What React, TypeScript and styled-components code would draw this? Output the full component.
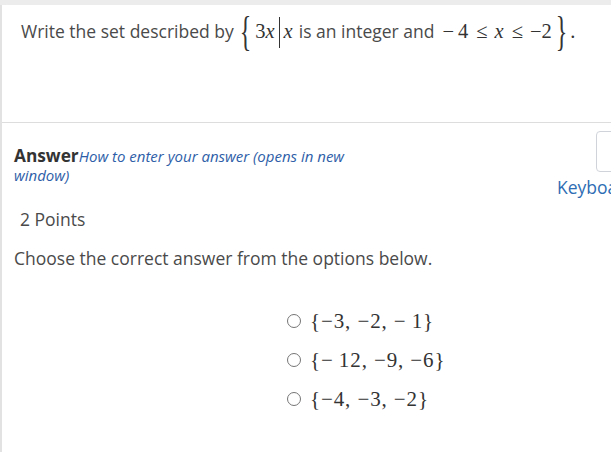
import React from 'react';
import styled, { createGlobalStyle } from 'styled-components';

const Global = createGlobalStyle`
  body {
    margin: 0;
    background: #ffffff;
    font-family: "Open Sans", "Liberation Sans", sans-serif;
    color: #4a4a4a;
    overflow: hidden;
  }
`;

const Page = styled.div`
  border-top: 5px solid #ececec;
  height: 447px;
  overflow: hidden;
`;

const Sheet = styled.div`
  border-left: 2px solid #e2e2e2;
  height: 100%;
`;

const QuestionPanel = styled.div`
  height: 118px;
  padding: 6px 19px 0;
  box-sizing: border-box;
  border-bottom: 1px solid #dddddd;
  font-size: 17.5px;
`;

const Prompt = styled.div`
  display: flex;
  align-items: center;
  height: 40px;
  white-space: nowrap;
`;

const Math = styled.span`
  font-family: "Liberation Serif", "Times New Roman", serif;
  font-size: 20.5px;
  color: #333333;
`;

const Var = styled(Math)`
  font-style: italic;
`;

const BigBrace = styled.span`
  display: inline-block;
  font-family: "Liberation Serif", serif;
  font-size: 24px;
  color: #333333;
  transform: scale(1, 1.75);
`;

const Bar = styled.span`
  display: inline-block;
  width: 0;
  height: 31px;
  border-left: 1.5px solid #333333;
  margin-top: 2px;
`;

const Gap = styled.span<{ $w: number }>`
  display: inline-block;
  flex: none;
  width: ${(p) => p.$w}px;
`;

const AnswerSection = styled.div`
  padding: 0 0 0 12px;
  font-size: 17.5px;
`;

const AnswerHeader = styled.div`
  display: flex;
  justify-content: space-between;
  margin-right: -56px;
`;

const AnswerTitle = styled.div`
  width: 345px;
  padding-top: 23px;
  line-height: 18px;
`;

const AnswerLabel = styled.span`
  font-weight: 700;
  font-size: 17.3px;
  color: #333333;
`;

const HelpLink = styled.a`
  font-style: italic;
  font-size: 15px;
  color: #2e5ea8;
  text-decoration: none;
`;

const KeyboardColumn = styled.div`
  width: 110px;
  padding-top: 8px;
  display: flex;
  flex-direction: column;
  align-items: flex-start;
`;

const KeyboardButton = styled.div`
  margin-left: 39px;
  width: 60px;
  height: 41px;
  border: 1px solid #d0d4da;
  border-radius: 4px;
  box-sizing: border-box;
`;

const KeyboardLabel = styled.div`
  margin-top: 3px;
  font-size: 17.5px;
  color: #2e6db4;
  white-space: nowrap;
`;

const Points = styled.div`
  margin: 8px 0 0 6px;
`;

const Instruction = styled.div`
  margin-top: 15px;
`;

const Options = styled.div`
  display: flex;
  flex-direction: column;
  gap: 15px;
  margin: 39px 0 0 273px;
`;

const Option = styled.label`
  display: flex;
  align-items: center;
  gap: 9px;
  height: 24px;
`;

const Radio = styled.span`
  width: 12px;
  height: 12px;
  border: 1.3px solid #757575;
  border-radius: 50%;
  flex: none;
`;

const OptionText = styled.span`
  font-family: "Liberation Serif", "Times New Roman", serif;
  font-size: 21px;
  letter-spacing: 0.9px;
  color: #333333;
  white-space: nowrap;
`;

const options = ['{\u22123, \u22122, \u2212\u20091}', '{\u2212\u200912, \u22129, \u22126}', '{\u22124, \u22123, \u22122}'];

export default function App() {
  return (
    <>
      <Global />
      <Page>
        <Sheet>
          <QuestionPanel>
            <Prompt>
              <span>Write the set described by</span>
              <Gap $w={6} />
              <BigBrace>{'{'}</BigBrace>
              <Gap $w={4} />
              <Math>3</Math>
              <Var>x</Var>
              <Gap $w={4} />
              <Bar />
              <Gap $w={4} />
              <Var>x</Var>
              <Gap $w={6} />
              <span>is an integer and</span>
              <Gap $w={8} />
              <Math>{'\u2212'}</Math>
              <Gap $w={4} />
              <Math>4</Math>
              <Gap $w={8} />
              <Math>{'\u2264'}</Math>
              <Gap $w={7} />
              <Var>x</Var>
              <Gap $w={8} />
              <Math>{'\u2264'}</Math>
              <Gap $w={7} />
              <Math>{'\u22122'}</Math>
              <Gap $w={4} />
              <BigBrace>{'}'}</BigBrace>
              <Gap $w={3} />
              <Math>.</Math>
            </Prompt>
          </QuestionPanel>
          <AnswerSection>
            <AnswerHeader>
              <AnswerTitle>
                <AnswerLabel>Answer</AnswerLabel>
                <HelpLink href="#">How to enter your answer (opens in new window)</HelpLink>
              </AnswerTitle>
              <KeyboardColumn>
                <KeyboardButton />
                <KeyboardLabel>Keyboard Shortcuts</KeyboardLabel>
              </KeyboardColumn>
            </AnswerHeader>
            <Points>2 Points</Points>
            <Instruction>Choose the correct answer from the options below.</Instruction>
            <Options>
              {options.map((o) => (
                <Option key={o}>
                  <Radio />
                  <OptionText>{o}</OptionText>
                </Option>
              ))}
            </Options>
          </AnswerSection>
        </Sheet>
      </Page>
    </>
  );
}
